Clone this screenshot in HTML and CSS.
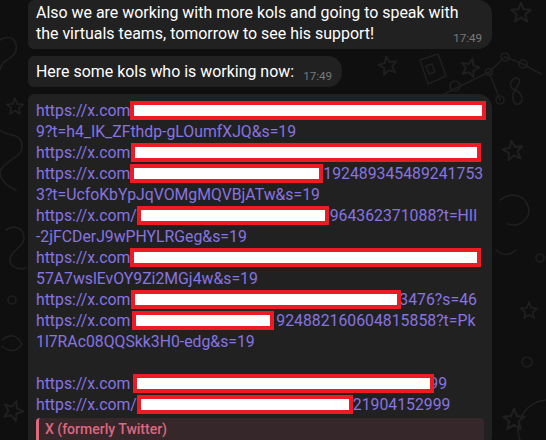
FILE: index.html
```html
<!DOCTYPE html>
<html lang="en">
<head>
<meta charset="utf-8">
<title>Chat</title>
<link rel="stylesheet" href="styles.css">
</head>
<body>
<svg class="pattern" width="546" height="440" viewBox="0 0 546 440" aria-hidden="true">
  <defs>
    <symbol id="star" viewBox="-10 -10 20 20">
      <polygon points="0,-8 2.06,-2.83 7.61,-2.47 3.33,1.08 4.7,6.47 0,3.5 -4.7,6.47 -3.33,1.08 -7.61,-2.47 -2.06,-2.83"/>
    </symbol>
  </defs>
  <g class="doodle">
    <use href="#star" x="376" y="54" width="24" height="24" transform="rotate(-12 388 66)"/>
    <use href="#star" x="458" y="56" width="24" height="24" transform="rotate(15 470 68)"/>
    <use href="#star" x="508" y="0" width="26" height="26"/>
    <use href="#star" x="500" y="138" width="26" height="26" transform="rotate(-10 513 151)"/>
    <use href="#star" x="500" y="406" width="28" height="28"/>
    <use href="#star" x="0" y="398" width="26" height="26" transform="rotate(20 13 411)"/>
    <use href="#star" x="4" y="96" width="22" height="22"/>
    <use href="#star" x="518" y="300" width="22" height="22"/>
    <circle cx="455" cy="86" r="5"/>
    <circle cx="527" cy="362" r="5"/>
    <circle cx="540" cy="258" r="4"/>
    <circle cx="12" cy="300" r="4"/>
    <polyline points="505,57 523,64 541,74"/>
    <polyline points="505,57 489,72 500,100"/>
    <polyline points="489,72 440,96"/>
    <circle cx="505" cy="57" r="4"/>
    <circle cx="523" cy="64" r="4"/>
    <circle cx="489" cy="72" r="3.5"/>
    <circle cx="500" cy="100" r="4"/>
    <path d="M515 78 c-6 4 -6 10 0 12 c6 2 10 10 4 14 c-6 2 -8 -8 -4 -14 c4 -6 8 -12 0 -12 z"/>
    <path d="M420 60 l18 -6 l8 22 l-18 8 z M426 66 l6 -2 l3 8 l-6 2 z"/>
    <path d="M0 130 c10 8 20 2 22 14 c2 12 -12 14 -20 24 c-6 8 4 18 14 22"/>
    <path d="M6 230 c8 -6 18 -2 18 8 c0 10 -14 12 -14 22 c0 8 10 10 16 8"/>
    <path d="M2 340 q12 -10 20 4 q-8 12 -20 2"/>
    <path d="M500 200 c10 -8 24 -6 28 6 c4 12 -8 22 -20 18"/>
    <path d="M520 440 a30 30 0 0 1 26 -40"/>
    <path d="M496 250 c6 6 14 6 20 0"/>
    <path d="M0 40 c10 -6 18 0 16 10 c-2 10 -14 8 -16 20"/>
  </g>
</svg>

<main class="chat">
  <div class="msg full first">
    <p class="text">Also we are working with more kols and going to speak with<br>the virtuals teams, tomorrow to see his support!</p>
    <span class="time">17:49</span>
  </div>

  <div class="msg">
    <p class="text">Here some kols who is working now:<span class="spacer"></span></p>
    <span class="time">17:49</span>
  </div>

  <div class="msg full links">
    <div class="line">https://x.com<span class="redact r1"></span></div>
    <div class="line">9?t=h4_IK_ZFthdp-gLOumfXJQ&amp;s=19</div>
    <div class="line">https://x.com<span class="redact r2"></span></div>
    <div class="line">https://x.com<span class="redact r3"></span>192489345489241753</div>
    <div class="line">3?t=UcfoKbYpJqVOMgMQVBjATw&amp;s=19</div>
    <div class="line">https://x.com/<span class="redact r4"></span>3964362371088?t=HIl</div>
    <div class="line">-2jFCDerJ9wPHYLRGeg&amp;s=19</div>
    <div class="line">https://x.com<span class="redact r5"></span></div>
    <div class="line">57A7wslEvOY9Zi2MGj4w&amp;s=19</div>
    <div class="line">https://x.com<span class="redact r6"></span>3476?s=46</div>
    <div class="line">https://x.com<span class="redact r7"></span>924882160604815858?t=Pk</div>
    <div class="line">1l7RAc08QQSkk3H0-edg&amp;s=19</div>
    <div class="line"></div>
    <div class="line">https://x.com<span class="redact r8"></span>99</div>
    <div class="line">https://x.com/<span class="redact r9"></span>21904152999</div>
    <div class="preview">X (formerly Twitter)</div>
  </div>
</main>
</body>
</html>
```

FILE: styles.css
```css
* {
  box-sizing: border-box;
}

html,
body {
  margin: 0;
  height: 100%;
}

body {
  position: relative;
  overflow: hidden;
  background: #0f0f0f;
  color: #ffffff;
  font-family: Roboto, "Noto Sans", sans-serif;
  font-size: 15.95px;
  line-height: 21px;
}

.pattern {
  position: absolute;
  top: 0;
  left: 0;
  z-index: 0;
}

.doodle {
  fill: none;
  stroke: #1f1f1f;
  stroke-width: 1.6;
  stroke-linejoin: round;
  stroke-linecap: round;
}

.chat {
  position: relative;
  z-index: 1;
  display: flex;
  flex-direction: column;
  align-items: flex-start;
  gap: 7px;
  padding-left: 28px;
}

.msg {
  position: relative;
  background: #212121;
  border-radius: 6px 14px 14px 6px;
  padding: 5px 10px 5px 8px;
}

.msg.full {
  width: 464px;
  padding-right: 8px;
}

.msg.first {
  padding-top: 2px;
}

.text {
  margin: 0;
}

.spacer {
  display: inline-block;
  width: 38px;
}

.time {
  position: absolute;
  right: 10px;
  bottom: 4px;
  font-size: 11.6px;
  line-height: 14px;
  color: #7a7a7a;
}

.links {
  padding-top: 6px;
  padding-bottom: 0;
}

.line {
  height: 21px;
  white-space: nowrap;
  color: #8774e1;
  font-size: 15.8px;
}

.redact {
  position: relative;
  z-index: 1;
  display: inline-block;
  vertical-align: top;
  height: 19px;
  margin-top: 1px;
  border: 4px solid #ed1c24;
  background: #ffffff;
}

.r1 { width: 356px; }
.r2 { width: 350px; margin-left: 1px; }
.r3 { width: 193px; }
.r4 { width: 192px; margin-right: -8px; }
.r5 { width: 351px; }
.r6 { width: 270px; margin-left: 1px; margin-right: -2px; }
.r7 { width: 142px; margin-left: 2px; margin-right: 2px; }
.r8 { width: 301px; margin-left: 3px; margin-right: -5px; }
.r9 { width: 216px; }

.preview {
  margin-top: 3px;
  border-left: 3px solid #e06a7c;
  border-radius: 4px;
  background: #35272a;
  padding: 1px 6px 10px;
  color: #df6780;
  font-size: 14px;
  font-weight: 500;
}
```
